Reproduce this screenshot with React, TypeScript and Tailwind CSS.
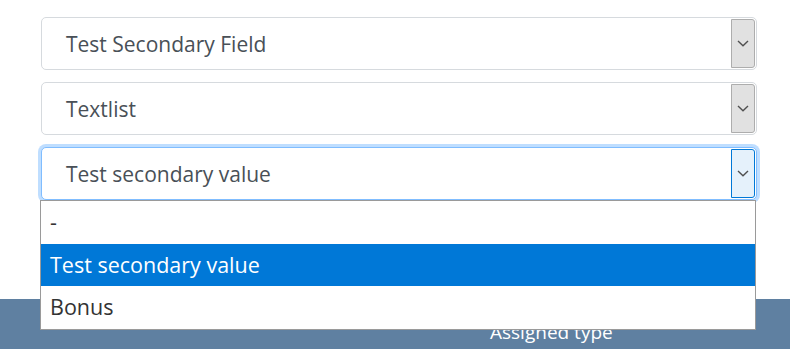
import { ReactNode } from 'react';

function Chevron() {
  return (
    <svg width="12" height="7" viewBox="0 0 12 7" fill="none">
      <path d="M1 1l5 4.8L11 1" stroke="#505050" strokeWidth="1.4" />
    </svg>
  );
}

function FakeSelect({ children, focused }: { children: ReactNode; focused?: boolean }) {
  return (
    <div
      className={
        focused
          ? 'relative flex h-[53px] items-center rounded-[5px] border border-[#80bdff] bg-white pl-[24px] shadow-[0_0_0_3px_rgba(0,123,255,0.25)]'
          : 'relative flex h-[53px] items-center rounded-[5px] border border-[#d6dade] bg-white pl-[24px]'
      }
    >
      <span className="mt-[3px] text-[21px] text-[#495057]">{children}</span>
      <div
        className={
          focused
            ? 'absolute right-[1px] top-[1px] bottom-[1px] flex w-[24px] items-center justify-center rounded-r-[3px] border border-[#0078d7] bg-[#e5f1fb]'
            : 'absolute right-[1px] top-[1px] bottom-[1px] flex w-[24px] items-center justify-center rounded-r-[3px] border border-[#adadad] bg-[#e1e1e1]'
        }
      >
        <Chevron />
      </div>
    </div>
  );
}

function App() {
  const options = ['-', 'Test secondary value', 'Bonus'];
  return (
    <div className="relative h-[349px] w-[790px] overflow-hidden bg-white font-['Open_Sans','Noto_Sans',sans-serif]">
      <div className="flex flex-col gap-[12px] pl-[41px] pr-[33px] pt-[17px]">
        <FakeSelect>Test Secondary Field</FakeSelect>
        <FakeSelect>Textlist</FakeSelect>
        <FakeSelect focused>Test secondary value</FakeSelect>
      </div>
      <div className="mt-[99px] flex h-[50px] bg-[#5f80a1] pl-[490px]">
        <span className="mt-[19px] text-[19px] text-white">Assigned type</span>
      </div>

      {/* open option list */}
      <div className="absolute left-[40px] top-[200px] w-[716px] border border-[#9a9a9a] bg-white">
        {options.map((o, i) => (
          <div
            key={o}
            className={
              i === 1
                ? 'flex h-[42px] items-center bg-[#0078d7] pl-[9px] text-[21.5px] text-white'
                : 'flex h-[43px] items-center pl-[9px] text-[21.5px] text-[#333]'
            }
          >
            {o}
          </div>
        ))}
      </div>
    </div>
  );
}

export default App;
